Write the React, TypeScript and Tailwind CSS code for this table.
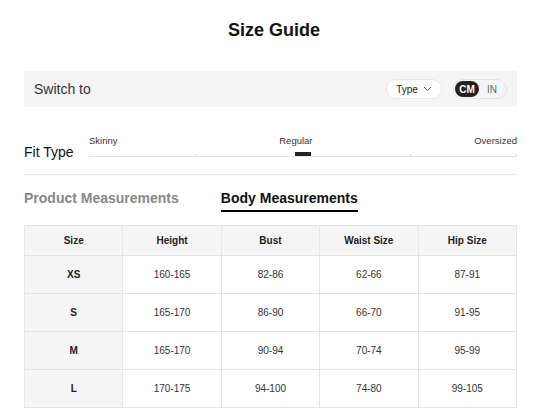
const rows = [
  { size: "XS", height: "160-165", bust: "82-86", waist: "62-66", hip: "87-91" },
  { size: "S", height: "165-170", bust: "86-90", waist: "66-70", hip: "91-95" },
  { size: "M", height: "165-170", bust: "90-94", waist: "70-74", hip: "95-99" },
  { size: "L", height: "170-175", bust: "94-100", waist: "74-80", hip: "99-105" },
];

function Chevron() {
  return (
    <svg width="9" height="6" viewBox="0 0 9 6" fill="none">
      <path d="M1 1l3.5 3.5L8 1" stroke="#555" strokeWidth="1" />
    </svg>
  );
}

function FitSlider() {
  return (
    <div className="flex-1">
      <div className="flex h-[12px] justify-between text-[9.5px] leading-[12px] text-[#333]">
        <span>Skinny</span>
        <span>Regular</span>
        <span>Oversized</span>
      </div>
      <div className="relative mt-[5px] h-[6px]">
        <div className="absolute left-0 right-0 top-[4px] h-px bg-[#e5e5e5]" />
        <div className="absolute left-0 top-[2px] h-[2px] w-px bg-[#d9d9d9]" />
        <div className="absolute left-1/4 top-[2px] h-[2px] w-px bg-[#d9d9d9]" />
        <div className="absolute left-3/4 top-[2px] h-[2px] w-px bg-[#d9d9d9]" />
        <div className="absolute right-0 top-[2px] h-[2px] w-px bg-[#d9d9d9]" />
        <div className="absolute left-1/2 top-0 h-[4px] w-[16px] -translate-x-1/2 bg-[#222]" />
      </div>
    </div>
  );
}

export default function App() {
  return (
    <div className="w-[536px] min-h-[415px] bg-white font-['Liberation_Sans',Arial,sans-serif] text-[#333]">
      <div className="mx-[24px] w-[493px]">
        <h1 className="pt-[21px] pl-[7px] text-center text-[18px] font-bold leading-none text-[#111]">
          Size Guide
        </h1>

        <div className="mt-[32px] flex h-[36px] items-center justify-between bg-[#f5f5f5] px-[10px]">
          <span className="text-[14px] text-[#333]">Switch to</span>
          <div className="flex items-center gap-[11px]">
            <button className="flex h-[20px] w-[56px] items-center justify-center gap-[5px] rounded-full border border-[#e8e8e8] bg-white text-[10px] text-[#222]">
              Type
              <Chevron />
            </button>
            <div className="flex h-[20px] w-[54px] items-center rounded-full border border-[#e5e5e5] p-px">
              <span className="flex h-[16px] w-[24px] items-center justify-center rounded-full bg-[#222] text-[10px] font-bold text-white">
                CM
              </span>
              <span className="flex-1 text-center text-[10px] text-[#666]">IN</span>
            </div>
          </div>
        </div>

        <div className="mt-[28px] flex items-start">
          <span className="mt-[7px] w-[65px] text-[14px] leading-5 text-[#111]">Fit Type</span>
          <FitSlider />
        </div>

        <div className="mt-[12px] h-px bg-[#e8e8e8]" />

        <div className="mt-[13px] flex gap-[42px] text-[14px] font-bold leading-5">
          <span className="pb-[2px] text-[#888]">Product Measurements</span>
          <span className="border-b-2 border-black pb-[2px] text-[#111]">Body Measurements</span>
        </div>

        <table className="mt-[13px] w-full table-fixed border-collapse text-center text-[10px]">
          <thead>
            <tr className="h-[30px] bg-[#f5f5f5] text-[#222]">
              <th className="border border-[#e5e5e5] font-bold">Size</th>
              <th className="border border-[#e5e5e5] font-bold">Height</th>
              <th className="border border-[#e5e5e5] font-bold">Bust</th>
              <th className="border border-[#e5e5e5] font-bold">Waist Size</th>
              <th className="border border-[#e5e5e5] font-bold">Hip Size</th>
            </tr>
          </thead>
          <tbody>
            {rows.map((r) => (
              <tr key={r.size} className="h-[38px] text-[#333]">
                <td className="border border-[#e5e5e5] bg-[#f5f5f5] font-bold text-[#222]">{r.size}</td>
                <td className="border border-[#e5e5e5]">{r.height}</td>
                <td className="border border-[#e5e5e5]">{r.bust}</td>
                <td className="border border-[#e5e5e5]">{r.waist}</td>
                <td className="border border-[#e5e5e5]">{r.hip}</td>
              </tr>
            ))}
          </tbody>
        </table>
      </div>
    </div>
  );
}
